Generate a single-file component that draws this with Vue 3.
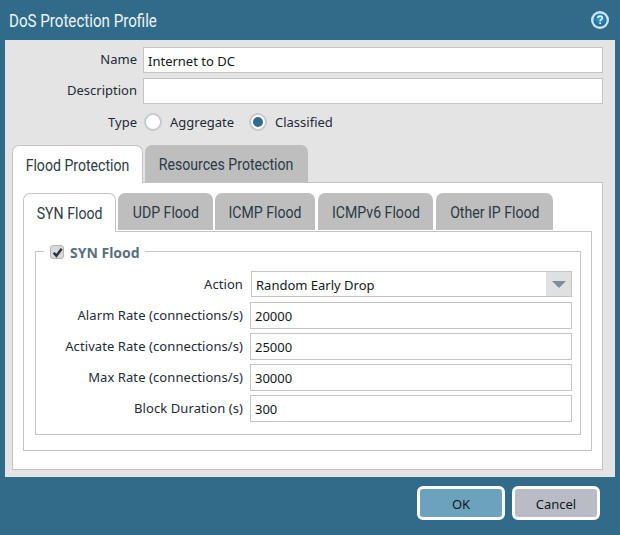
<script setup>
const rates = [
  { label: 'Alarm Rate (connections/s)', value: '20000' },
  { label: 'Activate Rate (connections/s)', value: '25000' },
  { label: 'Max Rate (connections/s)', value: '30000' },
  { label: 'Block Duration (s)', value: '300' }
]
const innerTabs = ['UDP Flood', 'ICMP Flood', 'ICMPv6 Flood', 'Other IP Flood']
</script>

<template>
  <div class="dialog">
    <header class="titlebar">
      <h1>DoS Protection Profile</h1>
      <svg class="help" width="20" height="20" viewBox="0 0 20 20" aria-label="Help">
        <defs>
          <radialGradient id="helpFill" cx="50%" cy="40%" r="60%">
            <stop offset="0%" stop-color="#3f9fd0" />
            <stop offset="100%" stop-color="#14679c" />
          </radialGradient>
        </defs>
        <circle cx="10" cy="10" r="9" fill="#cfe3ee" />
        <circle cx="10" cy="10" r="6.6" fill="url(#helpFill)" />
        <path d="M7.8 8.1c0-1.3 1-2 2.3-2s2.2.8 2.2 1.9c0 1.7-2.2 1.6-2.2 3.3" fill="none" stroke="#e8f2f8" stroke-width="1.6" />
        <rect x="9.3" y="12.4" width="1.7" height="1.7" fill="#e8f2f8" />
      </svg>
    </header>

    <main class="panel">
      <div class="row top-row">
        <label class="label">Name</label>
        <div class="input name-input">Internet to DC</div>
      </div>
      <div class="row top-row">
        <label class="label">Description</label>
        <div class="input name-input"></div>
      </div>
      <div class="row type-row">
        <label class="label">Type</label>
        <span class="radio"></span>
        <span class="radio-text first">Aggregate</span>
        <span class="radio checked"></span>
        <span class="radio-text">Classified</span>
      </div>

      <nav class="tabs outer-tabs">
        <div class="tab active outer-first"><span class="tab-text">Flood Protection</span></div>
        <div class="tab outer-second"><span class="tab-text">Resources Protection</span></div>
      </nav>
      <section class="tab-box outer-box">
        <nav class="tabs inner-tabs">
          <div class="tab active inner-first"><span class="tab-text">SYN Flood</span></div>
          <div v-for="t in innerTabs" :key="t" class="tab inner-tab"><span class="tab-text">{{ t }}</span></div>
        </nav>
        <section class="tab-box inner-box">
          <fieldset class="group">
            <legend>
              <span class="check">
                <svg width="11" height="11" viewBox="0 0 10 10"><path d="M1.5 5.2 4 8 8.8 1.6" fill="none" stroke="#26343f" stroke-width="2.2" /></svg>
              </span>
              <span class="legend-text">SYN Flood</span>
            </legend>
            <div class="row action-row">
              <label class="label rate-label">Action</label>
              <div class="input select">
                <span class="select-text">Random Early Drop</span>
                <span class="select-btn"><i class="arrow"></i></span>
              </div>
            </div>
            <div v-for="r in rates" :key="r.label" class="row rate-row">
              <label class="label rate-label">{{ r.label }}</label>
              <div class="input rate-input">{{ r.value }}</div>
            </div>
          </fieldset>
        </section>
      </section>
    </main>

    <footer class="actions">
      <button class="btn ok">OK</button>
      <button class="btn cancel">Cancel</button>
    </footer>
  </div>
</template>

<style>
html, body { margin: 0; background: #316b8a; }
</style>

<style scoped>
.dialog {
  width: 620px;
  height: 535px;
  background: #316b8a;
  font-family: "Noto Sans", "Open Sans", sans-serif;
  font-size: 13px;
  color: #1d2b36;
  overflow: hidden;
}
.titlebar {
  height: 40px;
  padding: 0 10px 0 9px;
  box-sizing: border-box;
  display: flex;
  align-items: center;
  justify-content: space-between;
}
h1 {
  margin: 0;
  font: 400 18px Roboto, sans-serif;
  color: #eef4f7;
  white-space: nowrap;
  transform: scaleX(0.84);
  transform-origin: left center;
}
.panel {
  margin: 0 5px;
  height: 437px;
  box-sizing: border-box;
  background: #e4e4e4;
  padding: 7px 12px 0 7px;
}
.row { display: flex; align-items: center; }
.top-row { height: 26px; margin-bottom: 5px; }
.label {
  width: 125px;
  margin-right: 6px;
  text-align: right;
  flex: none;
}
.top-row .label { margin-top: -2px; }
.input {
  box-sizing: border-box;
  background: #fff;
  border: 1px solid #c4c4c4;
  display: flex;
  align-items: center;
  padding: 1px 0 0 4px;
  color: #101820;
}
.name-input { width: 460px; height: 26px; }
.type-row { height: 24px; margin-top: 6px; }
.radio {
  box-sizing: border-box;
  width: 18px;
  height: 18px;
  border-radius: 50%;
  background: #fff;
  border: 2px solid #c6cace;
  display: flex;
  align-items: center;
  justify-content: center;
  flex: none;
  margin-left: 1px;
}
.radio.checked { margin-left: 0; }
.radio.checked::after {
  content: "";
  width: 10px;
  height: 10px;
  border-radius: 50%;
  background: #2f6c8f;
}
.radio-text { margin-left: 8px; }
.radio-text.first { width: 79px; }
.tabs { display: flex; align-items: flex-start; }
.outer-tabs { margin-top: 11px; height: 37px; }
.tab {
  box-sizing: border-box;
  background: #bebebe;
  border-radius: 7px 7px 0 0;
  font: 400 17px Roboto, sans-serif;
  color: #2b3a44;
  display: flex;
  align-items: center;
  justify-content: center;
  flex: none;
}
.tab-text {
  white-space: nowrap;
  flex: none;
  transform: scaleX(0.83);
}
.tab.active {
  background: #fff;
  border: 1px solid #c4c4c4;
  border-bottom: 0;
  position: relative;
  z-index: 1;
}
.outer-first { width: 131px; height: 38px; margin-right: 2px; }
.outer-second { width: 163px; height: 37px; }
.tab-box {
  box-sizing: border-box;
  background: #fff;
  border: 1px solid #c4c4c4;
}
.outer-box {
  width: 591px;
  height: 288px;
  padding: 10px 10px 0;
}
.inner-tabs { height: 38px; }
.inner-first { width: 93px; height: 39px; margin-right: 2px; }
.inner-tab { height: 37px; }
.inner-tab:nth-child(2) { width: 95px; margin-right: 2px; }
.inner-tab:nth-child(3) { width: 100px; margin-right: 3px; }
.inner-tab:nth-child(4) { width: 115px; margin-right: 3px; }
.inner-tab:nth-child(5) { width: 117px; }
.inner-box {
  width: 569px;
  height: 220px;
  padding: 9px 11px 0;
}
.group {
  box-sizing: border-box;
  width: 546px;
  height: 194px;
  margin: 0;
  padding: 0;
  border: 1px solid #c4c4c4;
}
.group legend {
  box-sizing: border-box;
  margin-left: 8px;
  padding: 2px 5px 0 6px;
  display: flex;
  align-items: center;
  height: 20px;
}
.check {
  box-sizing: border-box;
  width: 14px;
  height: 14px;
  border-radius: 3px;
  background: #d9d9d9;
  border: 1px solid #b5b5b5;
  display: flex;
  align-items: center;
  justify-content: center;
}
.legend-text {
  margin-left: 6px;
  font-size: 14px;
  font-weight: 700;
  color: #5b6f80;
}
.action-row { height: 26px; margin-top: 10px; }
.rate-row { height: 27px; margin-top: 4px; }
.rate-row .label { margin-top: -2px; }
.action-row + .rate-row { margin-top: 5px; }
.rate-label { width: 207px; margin-right: 7px; letter-spacing: 0.08px; }
.select {
  width: 321px;
  height: 26px;
  margin-left: 1px;
  padding: 0;
  justify-content: space-between;
}
.select-text { padding: 1px 0 0 4px; }
.select-btn {
  width: 25px;
  height: 24px;
  background: #dfe0e1;
  display: flex;
  align-items: center;
  justify-content: center;
}
.arrow {
  width: 0;
  height: 0;
  border-left: 7px solid transparent;
  border-right: 7px solid transparent;
  border-top: 7px solid #7c8f9d;
}
.rate-input { width: 322px; height: 27px; }
.actions {
  display: flex;
  justify-content: flex-end;
  gap: 7px;
  padding: 9px 20px 0 0;
}
.btn {
  box-sizing: border-box;
  width: 88px;
  height: 34px;
  border: 3px solid #fff;
  border-radius: 6px;
  font: inherit;
  color: #101820;
  padding: 1px 0 0;
}
.ok { background: #6ca2bb; }
.cancel { background: #b9bcc5; }
</style>
